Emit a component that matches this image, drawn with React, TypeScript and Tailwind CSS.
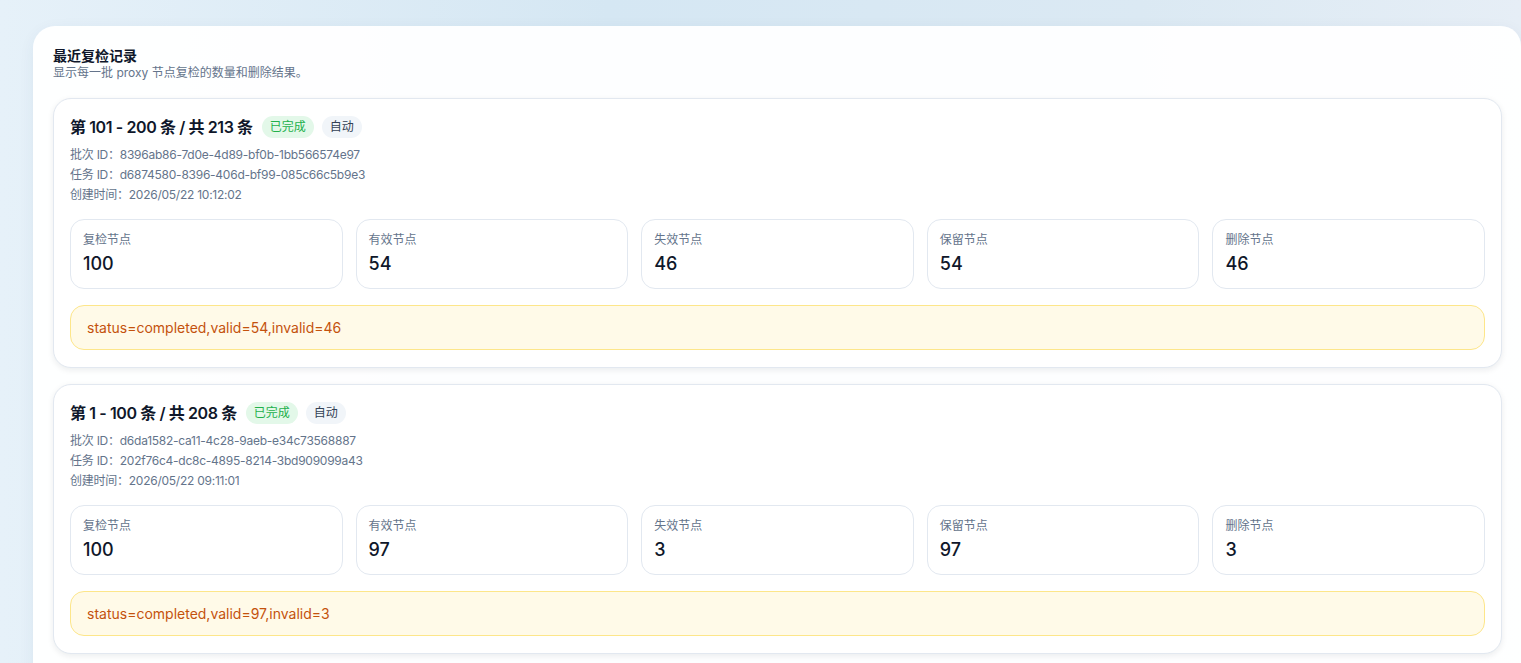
import React from "react";

type Batch = {
  title: string;
  batchId: string;
  taskId: string;
  created: string;
  stats: [string, string][];
  note: string;
};

const batches: Batch[] = [
  {
    title: "第 101 - 200 条 / 共 213 条",
    batchId: "8396ab86-7d0e-4d89-bf0b-1bb566574e97",
    taskId: "d6874580-8396-406d-bf99-085c66c5b9e3",
    created: "2026/05/22 10:12:02",
    stats: [
      ["复检节点", "100"],
      ["有效节点", "54"],
      ["失效节点", "46"],
      ["保留节点", "54"],
      ["删除节点", "46"],
    ],
    note: "status=completed,valid=54,invalid=46",
  },
  {
    title: "第 1 - 100 条 / 共 208 条",
    batchId: "d6da1582-ca11-4c28-9aeb-e34c73568887",
    taskId: "202f76c4-dc8c-4895-8214-3bd909099a43",
    created: "2026/05/22 09:11:01",
    stats: [
      ["复检节点", "100"],
      ["有效节点", "97"],
      ["失效节点", "3"],
      ["保留节点", "97"],
      ["删除节点", "3"],
    ],
    note: "status=completed,valid=97,invalid=3",
  },
];

function BatchCard({ b }: { b: Batch }) {
  return (
    <div className="rounded-[18px] border border-[#e2e8f0] bg-white px-4 pt-[17px] pb-[17px] shadow-[0_2px_6px_rgba(15,23,42,0.08)]">
      <div className="flex items-center gap-2">
        <div className="text-[16px] leading-[22px] font-semibold tracking-[-0.4px] text-[#0f172a] mr-px">{b.title}</div>
        <span className="rounded-full bg-[#e3f8e9] px-2 py-[3px] text-xs leading-4 text-[#22b04b]">已完成</span>
        <span className="rounded-full bg-[#f1f5f9] px-2 py-[3px] text-xs leading-4 text-[#334155]">自动</span>
      </div>
      <div className="mt-[7px] text-xs leading-5 tracking-[-0.25px] text-[#64748b]">
        <div>批次 ID：{b.batchId}</div>
        <div>任务 ID：{b.taskId}</div>
        <div>创建时间：{b.created}</div>
      </div>
      <div className="mt-[14px] grid grid-cols-5 gap-[13px]">
        {b.stats.map(([label, value]) => (
          <div key={label} className="rounded-[14px] border border-[#e2e8f0] bg-white px-3 pt-3 pb-[10px]">
            <div className="text-xs leading-4 text-[#64748b]">{label}</div>
            <div className="mt-[2px] text-[18px] leading-7 font-medium text-[#0f172a]">{value}</div>
          </div>
        ))}
      </div>
      <div className="mt-4 rounded-[14px] border border-[#fde68a] bg-[#fffae8] px-4 py-3 text-[14px] leading-[19px] text-[#c4520d]">
        {b.note}
      </div>
    </div>
  );
}

export default function App() {
  return (
    <div
      className="min-h-[663px] w-full overflow-hidden bg-[linear-gradient(90deg,#e6f1f9_0%,#d5e7f3_40%,#dbe9f3_75%,#e6eef6_100%)] pl-[33px] pt-[26px]"
      style={{ fontFamily: 'Inter, "Noto Sans CJK SC", sans-serif' }}
    >
      <div className="min-h-[700px] rounded-tl-[22px] rounded-tr-[20px] bg-white/95 pl-5 pr-[19px] pt-[21px] shadow-[0_4px_16px_rgba(30,64,100,0.06)]">
        <div className="text-[14px] leading-[18px] font-bold text-[#0f172a]">最近复检记录</div>
        <div className="text-xs leading-[16px] text-[#64748b]">显示每一批 proxy 节点复检的数量和删除结果。</div>
        <div className="mt-[17px] flex flex-col gap-4">
          {batches.map((b) => (
            <BatchCard key={b.batchId} b={b} />
          ))}
        </div>
      </div>
    </div>
  );
}
